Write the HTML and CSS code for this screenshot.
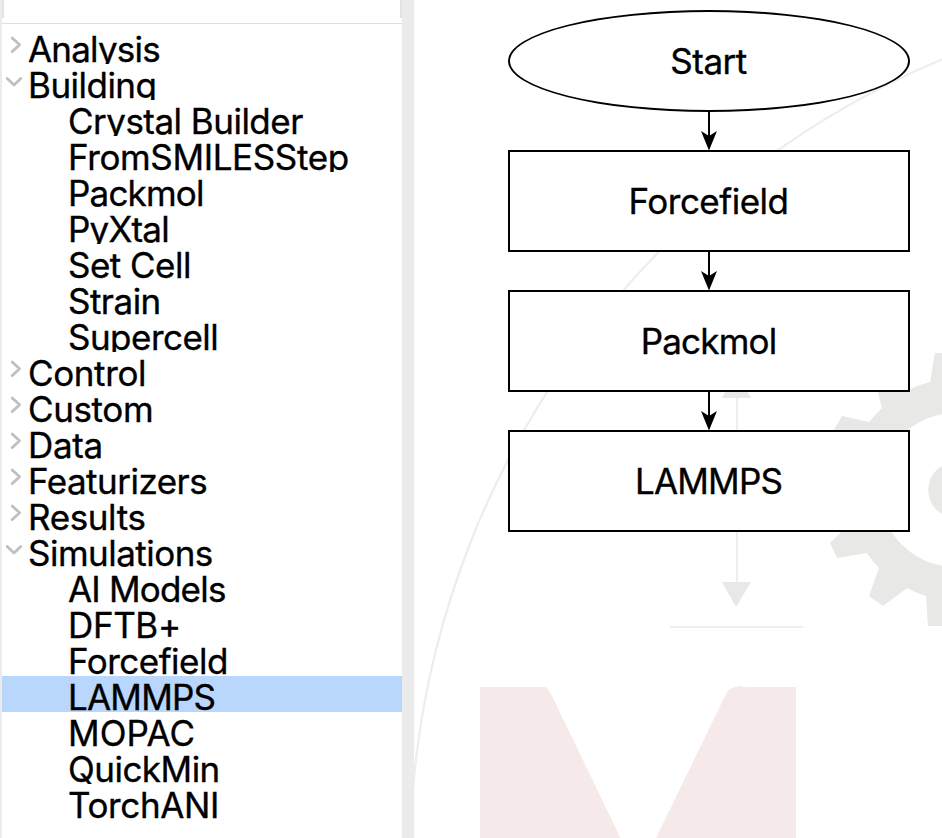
FILE: index.html
```html
<!DOCTYPE html>
<html lang="en">
<head>
<meta charset="utf-8">
<title>Flowchart editor</title>
<link rel="stylesheet" href="styles.css">
</head>
<body>
<svg class="defs" aria-hidden="true">
  <symbol id="closed" viewBox="0 0 28 36"><path d="M12.2 10 19.600 16.800 12.200 23.600"/></symbol>
  <symbol id="open" viewBox="0 0 28 36"><path d="M7.2 14.400 14 21 20.800 14.400"/></symbol>
  <symbol id="arrow" viewBox="0 0 18 38"><path d="M8 0h2v26h-2z"/><path d="M9 38.5 1 19 9 24 17 19z"/></symbol>
</svg>
<main class="app">
  <aside class="sidebar">
    <div class="header"></div>
    <ul class="tree">
      <li class="row tight"><svg class="chev"><use href="#closed"/></svg><span>Analysis</span></li>
      <li class="row"><svg class="chev"><use href="#open"/></svg><span>Building</span></li>
      <li class="row child"><span>Crystal Builder</span></li>
      <li class="row child loose"><span>FromSMILESStep</span></li>
      <li class="row child tight"><span>Packmol</span></li>
      <li class="row child tight"><span>PyXtal</span></li>
      <li class="row child"><span>Set Cell</span></li>
      <li class="row child"><span>Strain</span></li>
      <li class="row child"><span>Supercell</span></li>
      <li class="row loose"><svg class="chev"><use href="#closed"/></svg><span>Control</span></li>
      <li class="row loose"><svg class="chev"><use href="#closed"/></svg><span>Custom</span></li>
      <li class="row loose"><svg class="chev"><use href="#closed"/></svg><span>Data</span></li>
      <li class="row"><svg class="chev"><use href="#closed"/></svg><span>Featurizers</span></li>
      <li class="row loose"><svg class="chev"><use href="#closed"/></svg><span>Results</span></li>
      <li class="row"><svg class="chev"><use href="#open"/></svg><span>Simulations</span></li>
      <li class="row child tight"><span>AI Models</span></li>
      <li class="row child loose"><span>DFTB+</span></li>
      <li class="row child"><span>Forcefield</span></li>
      <li class="row child selected tight"><span>LAMMPS</span></li>
      <li class="row child looser"><span>MOPAC</span></li>
      <li class="row child"><span>QuickMin</span></li>
      <li class="row child loose"><span>TorchANI</span></li>
    </ul>
  </aside>
  <div class="sash"></div>
  <section class="canvas">
    <svg class="watermark" viewBox="414 0 528 838" aria-hidden="true">
      <circle class="ring" cx="1279.500" cy="860.500" r="869.3"/>
      <path class="dim" d="M737 392V582M670 627H803"/>
      <path class="grey" d="M722 398H751L736.500 372ZM722 582H751L736 607Z"/>
      <path class="grey" d="M942 353H935L930 382Q919 385 910 389L876 385 882 408Q875 415 869 422L842 416 833 431V532H841L830 543 837 558 867 553Q872 561 879 568L869 596 883 606 907 588Q916 593 926 596L928 626H942V565.700A77 77 0 0 1 942 414.300Z"/>
      <circle class="grey" cx="956" cy="490" r="27.800"/>
      <path class="red" d="M480 687H544Q548 687 552 696L620.500 838H480ZM656 838 726 694Q729 687 740 686L745 687H796V838Z"/>
    </svg>
    <div class="flow">
      <div class="node start">Start</div>
      <svg class="link"><use href="#arrow"/></svg>
      <div class="node">Forcefield</div>
      <svg class="link"><use href="#arrow"/></svg>
      <div class="node tight">Packmol</div>
      <svg class="link"><use href="#arrow"/></svg>
      <div class="node tight">LAMMPS</div>
    </div>
  </section>
</main>
</body>
</html>
```
FILE: styles.css
```css
* { box-sizing: border-box; }
body { margin: 0; background: #fff; color: #000; font: 35px/36px Inter, sans-serif; letter-spacing: -0.52px; -webkit-text-stroke: 0.35px #000; }
.defs { display: none; }
.app { display: flex; width: 942px; height: 838px; overflow: hidden; }
.sidebar { width: 402px; border-left: 2px solid #ebebeb; }
.header { height: 24px; border-bottom: 1px solid #e0e0e0; background: linear-gradient(#e4e4e4, #e4e4e4) 0 0 / 2px 18px no-repeat, linear-gradient(#e4e4e4, #e4e4e4) 100% 0 / 2px 18px no-repeat; }
.tree { list-style: none; margin: 0; padding: 4px 0 0; }
.row { display: flex; height: 36px; overflow: hidden; white-space: nowrap; }
.row span { padding-top: 3px; }
.child { padding-left: 66px; }
.tight { letter-spacing: -0.8px; }
.loose { letter-spacing: -0.38px; }
.looser { letter-spacing: 0.1px; }
.selected { background: #b9d6fc; }
.chev { width: 28px; height: 36px; margin-left: -2px; flex: none; fill: none; stroke: #c0c0c0; stroke-width: 2.8px; stroke-linecap: round; stroke-linejoin: round; }
.sash { width: 12px; background: #ebebeb; }
.canvas { width: 528px; display: grid; }
.watermark { grid-area: 1 / 1; width: 528px; height: 838px; }
.ring { fill: none; stroke: #ededed; stroke-width: 2.2px; }
.dim { fill: none; stroke: #eee; stroke-width: 2px; }
.grey { fill: #e8e8e7; }
.red { fill: #f5e9e9; }
.flow { grid-area: 1 / 1; z-index: 1; display: flex; flex-direction: column; align-items: center; width: 402px; margin: 10px 0 0 94px; }
.node { display: flex; align-items: center; justify-content: center; width: 402px; height: 102px; padding-right: 1px; border: 2px solid #000; background: #fff; }
.start { border-radius: 50%; }
.link { width: 18px; height: 38px; }
```
